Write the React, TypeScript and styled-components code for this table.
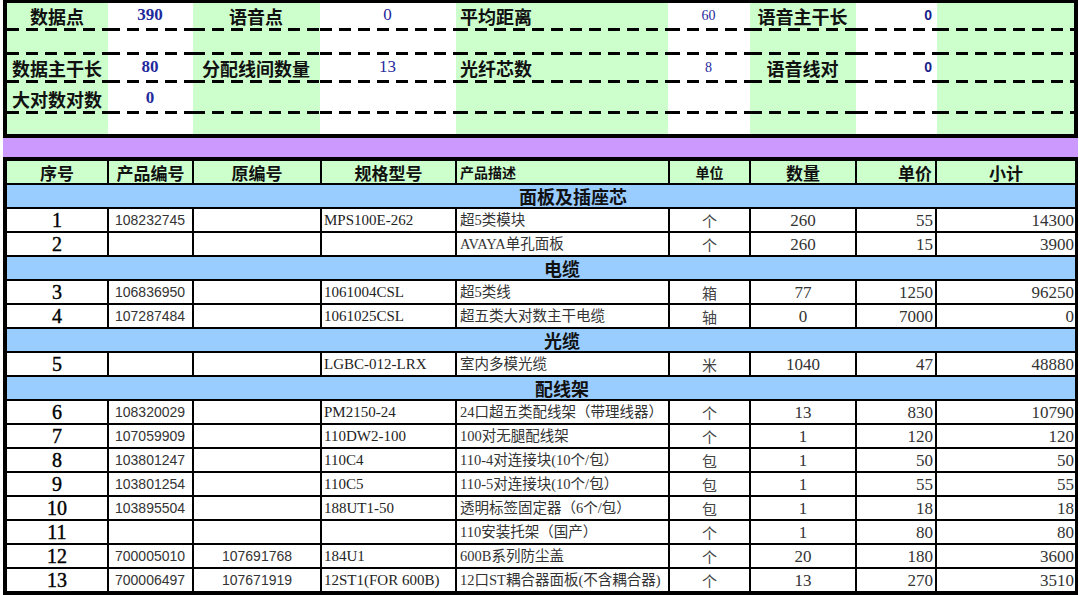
import { Fragment } from "react";
import styled, { createGlobalStyle } from "styled-components";

const GlobalStyle = createGlobalStyle`
  html, body {
    margin: 0;
    padding: 0;
    background: #fff;
  }
  body {
    font-family: "Liberation Serif", "Noto Sans CJK SC", serif;
    color: #111;
  }
`;

// spreadsheet column widths (summary block has no grid lines, sheet has 2px lines)
const SUM_COLS = "101px 85px 127px 136px 212px 82px 106px 81px 137px";
const SHEET_COLS = "100px 83px 126px 133px 211px 79px 104px 78px 138px";

const DASH = "repeating-linear-gradient(90deg, #000 0 12px, transparent 12px 19px)";

const Page = styled.div`
  width: 1075px;
  margin-left: 3px;
`;

const Summary = styled.div`
  border: 4px solid #000;
  border-top-width: 3px;
`;

const SumRow = styled.div<{ $h: number }>`
  display: grid;
  grid-template-columns: ${SUM_COLS};
  height: ${(p) => p.$h}px;
`;

const SumCell = styled.div<{ $green: boolean; $dash: boolean; $align: string }>`
  display: flex;
  align-items: flex-end;
  justify-content: ${(p) => p.$align};
  padding: 0 5px ${(p) => (p.$dash ? 6 : 1)}px 4px;
  background: ${(p) => (p.$dash ? `${DASH} left bottom / 100% 3px no-repeat, ` : "")}
    ${(p) => (p.$green ? "#ccffcc" : "#fff")};
  white-space: nowrap;
`;

type SumKind = "label" | "big" | "mid" | "small" | "sans";

const SumText = styled.span<{ $kind: SumKind }>`
  line-height: 1;
  ${(p) => {
    switch (p.$kind) {
      case "label":
        return `font: 700 18px/1 "Noto Sans CJK SC", sans-serif; color: #111;`;
      case "big":
        return `font: 700 17px/1 "Liberation Serif", serif; color: #1f2a9c; margin-bottom: 2px;`;
      case "mid":
        return `font: 400 17px/1 "Liberation Serif", serif; color: #1f2a9c; margin-bottom: 2px;`;
      case "small":
        return `font: 400 14px/1 "Liberation Serif", serif; color: #1f2a9c; margin-bottom: 2px;`;
      case "sans":
        return `font: 700 14px/1 "Liberation Sans", sans-serif; color: #1a1f8a; margin-bottom: 3px;`;
    }
  }}
`;

const Band = styled.div`
  height: 19px;
  background: #cc99ff;
`;

const Sheet = styled.div`
  display: grid;
  grid-template-columns: ${SHEET_COLS};
  grid-auto-rows: 22px;
  gap: 2px;
  background: #000;
  padding: 4px 3px 4px 4px;
`;

const HeadCell = styled.div<{ $align: string; $size: number }>`
  display: flex;
  align-items: center;
  justify-content: ${(p) => p.$align};
  padding: 0 3px;
  background: #ccffcc;
  font: 700 ${(p) => p.$size}px/1 "Noto Sans CJK SC", sans-serif;
  color: #111;
  white-space: nowrap;
`;

const CatRow = styled.div<{ $shift: number }>`
  grid-column: 1 / -1;
  display: flex;
  align-items: center;
  justify-content: center;
  padding-left: ${(p) => p.$shift}px;
  background: #99ccff;
  font: 700 18px/1 "Noto Sans CJK SC", sans-serif;
  color: #111;
`;

type CellKind = "seq" | "code" | "codeC" | "model" | "desc" | "unit" | "num" | "price" | "total";

const cellStyle: Record<CellKind, string> = {
  seq: `justify-content: center; font: 400 20px/1 "Liberation Serif", serif; color: #000; -webkit-text-stroke: 0.4px #000;`,
  code: `justify-content: flex-start; padding-left: 6px; font: 400 14px/1 "Liberation Sans", sans-serif; color: #333;`,
  codeC: `justify-content: center; font: 400 14px/1 "Liberation Sans", sans-serif; color: #333;`,
  model: `justify-content: flex-start; padding-left: 2px; font: 400 15px/1 "Liberation Serif", serif; color: #222;`,
  desc: `justify-content: flex-start; padding-left: 3px; font: 400 14.5px/1 "Liberation Serif", "Noto Sans CJK SC", serif; color: #333;`,
  unit: `justify-content: center; font: 400 15px/1 "Noto Sans CJK SC", sans-serif; color: #444;`,
  num: `justify-content: center; font: 400 17px/1 "Liberation Serif", serif; color: #333;`,
  price: `justify-content: flex-end; padding-right: 2px; font: 400 17px/1 "Liberation Serif", serif; color: #333;`,
  total: `justify-content: flex-end; padding-right: 1px; font: 400 17px/1 "Liberation Serif", serif; color: #333;`,
};

const Cell = styled.div<{ $kind: CellKind }>`
  display: flex;
  align-items: center;
  background: #fff;
  white-space: nowrap;
  overflow: hidden;
  ${(p) => cellStyle[p.$kind]}
`;

type SumItem = [string, SumKind, string?];

const sumRows: { h: number; dash: boolean; cells: SumItem[] }[] = [
  {
    h: 28,
    dash: true,
    cells: [
      ["数据点", "label"],
      ["390", "big"],
      ["语音点", "label"],
      ["0", "mid"],
      ["平均距离", "label", "flex-start"],
      ["60", "small"],
      ["语音主干长", "label"],
      ["0", "sans", "flex-end"],
      ["", "label"],
    ],
  },
  { h: 24, dash: true, cells: [] },
  {
    h: 28,
    dash: true,
    cells: [
      ["数据主干长", "label"],
      ["80", "big"],
      ["分配线间数量", "label"],
      ["13", "mid"],
      ["光纤芯数", "label", "flex-start"],
      ["8", "small"],
      ["语音线对", "label"],
      ["0", "sans", "flex-end"],
      ["", "label"],
    ],
  },
  {
    h: 31,
    dash: true,
    cells: [
      ["大对数对数", "label"],
      ["0", "big"],
    ],
  },
  { h: 20, dash: false, cells: [] },
];

const headers: [string, string, number][] = [
  ["序号", "center", 17],
  ["产品编号", "center", 17],
  ["原编号", "center", 17],
  ["规格型号", "center", 17],
  ["产品描述", "flex-start", 14],
  ["单位", "center", 14],
  ["数量", "center", 17],
  ["单价", "flex-end", 17],
  ["小计", "center", 17],
];

type Item = [string, string, string, string, string, string, string, string, string];
type Block = { cat: string; shift: number; items: Item[] };

const blocks: Block[] = [
  {
    cat: "面板及插座芯",
    shift: 64,
    items: [
      ["1", "108232745", "", "MPS100E-262", "超5类模块", "个", "260", "55", "14300"],
      ["2", "", "", "", "AVAYA单孔面板", "个", "260", "15", "3900"],
    ],
  },
  {
    cat: "电缆",
    shift: 42,
    items: [
      ["3", "106836950", "", "1061004CSL", "超5类线", "箱", "77", "1250", "96250"],
      ["4", "107287484", "", "1061025CSL", "超五类大对数主干电缆", "轴", "0", "7000", "0"],
    ],
  },
  {
    cat: "光缆",
    shift: 42,
    items: [["5", "", "", "LGBC-012-LRX", "室内多模光缆", "米", "1040", "47", "48880"]],
  },
  {
    cat: "配线架",
    shift: 42,
    items: [
      ["6", "108320029", "", "PM2150-24", "24口超五类配线架（带理线器）", "个", "13", "830", "10790"],
      ["7", "107059909", "", "110DW2-100", "100对无腿配线架", "个", "1", "120", "120"],
      ["8", "103801247", "", "110C4", "110-4对连接块(10个/包）", "包", "1", "50", "50"],
      ["9", "103801254", "", "110C5", "110-5对连接块(10个/包）", "包", "1", "55", "55"],
      ["10", "103895504", "", "188UT1-50", "透明标签固定器（6个/包）", "包", "1", "18", "18"],
      ["11", "", "", "", "110安装托架（国产）", "个", "1", "80", "80"],
      ["12", "700005010", "107691768", "184U1", "600B系列防尘盖", "个", "20", "180", "3600"],
      ["13", "700006497", "107671919", "12ST1(FOR 600B)", "12口ST耦合器面板(不含耦合器)", "个", "13", "270", "3510"],
    ],
  },
];

const kinds: CellKind[] = ["seq", "code", "codeC", "model", "desc", "unit", "num", "price", "total"];

export default function App() {
  return (
    <>
      <GlobalStyle />
      <Page>
        <Summary>
          {sumRows.map((row, r) => (
            <SumRow key={r} $h={row.h}>
              {Array.from({ length: 9 }).map((_, c) => {
                const item = row.cells[c];
                return (
                  <SumCell
                    key={c}
                    $green={c % 2 === 0}
                    $dash={row.dash}
                    $align={item?.[2] ?? "center"}
                  >
                    {item && item[0] && <SumText $kind={item[1]}>{item[0]}</SumText>}
                  </SumCell>
                );
              })}
            </SumRow>
          ))}
        </Summary>
        <Band />
        <Sheet>
          {headers.map(([t, align, size]) => (
            <HeadCell key={t} $align={align} $size={size}>
              {t}
            </HeadCell>
          ))}
          {blocks.map((b) => (
            <Fragment key={b.cat}>
              <CatRow $shift={b.shift}>{b.cat}</CatRow>
              {b.items.map((it) =>
                it.map((v, i) => (
                  <Cell key={`${it[0]}-${i}`} $kind={kinds[i]}>
                    {v}
                  </Cell>
                ))
              )}
            </Fragment>
          ))}
        </Sheet>
      </Page>
    </>
  );
}
